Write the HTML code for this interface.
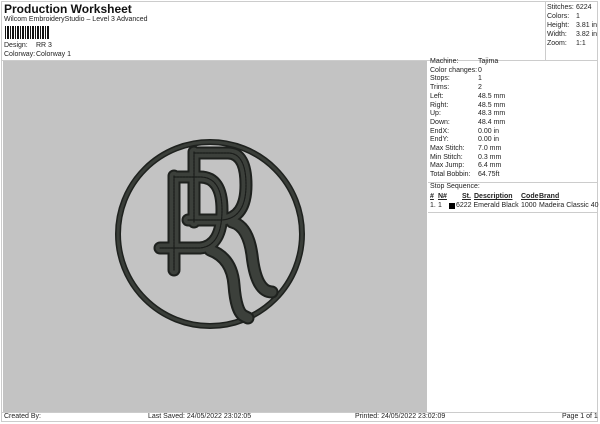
<!DOCTYPE html>
<html><head><meta charset="utf-8"><style>
body{margin:0;width:600px;height:424px;background:#fff;font-family:"Liberation Sans",Arial,sans-serif;position:relative;overflow:hidden;color:#222}
.a{position:absolute;font-size:7px;white-space:nowrap}
</style></head><body>
<div style="position:absolute;left:1px;top:1px;width:597px;height:421px;border:1px solid #ccc;box-sizing:border-box"></div>
<div class="a" style="left:4px;top:2px;font-size:12px;font-weight:bold;color:#111">Production Worksheet</div>
<div class="a" style="left:4px;top:16px">Wilcom EmbroideryStudio – Level 3 Advanced</div>
<svg style="position:absolute;left:5px;top:26px" width="44" height="13"><g fill="#111">
<rect x="0" y="0" width="1" height="13"/><rect x="2" y="0" width="2" height="13"/><rect x="5" y="0" width="1" height="13"/><rect x="7" y="0" width="2" height="13"/><rect x="10" y="0" width="1" height="13"/><rect x="12" y="0" width="2" height="13"/><rect x="15" y="0" width="1" height="13"/><rect x="17" y="0" width="2" height="13"/><rect x="20" y="0" width="1" height="13"/><rect x="22" y="0" width="2" height="13"/><rect x="25" y="0" width="1" height="13"/><rect x="27" y="0" width="2" height="13"/><rect x="30" y="0" width="1" height="13"/><rect x="32" y="0" width="2" height="13"/><rect x="35" y="0" width="1" height="13"/><rect x="37" y="0" width="2" height="13"/><rect x="40" y="0" width="1" height="13"/><rect x="42" y="0" width="2" height="13"/></g></svg>
<div class="a" style="left:4px;top:42px">Design:</div><div class="a" style="left:36px;top:42px">RR 3</div>
<div class="a" style="left:4px;top:51px">Colorway:</div><div class="a" style="left:36px;top:51px">Colorway 1</div>
<div style="position:absolute;left:545px;top:1px;width:1px;height:59px;background:#ccc"></div>
<div style="position:absolute;left:2px;top:60px;width:596px;height:1px;background:#ccc"></div>
<div class="a" style="left:547px;top:3px;line-height:9px">Stitches:<br>Colors:<br>Height:<br>Width:<br>Zoom:</div>
<div class="a" style="left:576px;top:3px;line-height:9px">6224<br>1<br>3.81 in<br>3.82 in<br>1:1</div>
<div style="position:absolute;left:3px;top:61px;width:424px;height:351px;background:#c3c3c3"></div>
<svg style="position:absolute;left:0;top:0" width="430" height="412">
<g fill="none" stroke-linecap="round" stroke-linejoin="round">
<circle cx="210" cy="234" r="92" stroke="#1e211e" stroke-width="6"/>
<circle cx="210" cy="234" r="92" stroke="#3a3e39" stroke-width="3"/>
<g stroke="#1e211e" stroke-width="13">
<path d="M194 152 V222"/><path d="M194 153 H228 Q246 153 246 185 Q246 218 222 220 H188"/><path d="M232 222 Q248 226 252 255 Q256 292 272 292"/>
<path d="M174 176 V270"/><path d="M174 177 H200 Q222 177 222 210 Q222 246 200 248 H160"/><path d="M210 250 Q232 258 234 285 Q236 312 244 316 L248 318"/>
</g>
<g stroke="#3c403b" stroke-width="9">
<path d="M194 152 V222"/><path d="M194 153 H228 Q246 153 246 185 Q246 218 222 220 H188"/><path d="M232 222 Q248 226 252 255 Q256 292 272 292"/>
<path d="M174 176 V270"/><path d="M174 177 H200 Q222 177 222 210 Q222 246 200 248 H160"/><path d="M210 250 Q232 258 234 285 Q236 312 244 316 L248 318"/>
</g>
<g stroke="#1a1c1a" stroke-width="1.2" stroke-dasharray="2 1">
<path d="M194 152 V222"/><path d="M194 153 H228 Q246 153 246 185 Q246 218 222 220 H188"/>
<path d="M174 176 V270"/><path d="M174 177 H200 Q222 177 222 210 Q222 246 200 248 H160"/>
</g></g></svg>
<div class="a" style="left:430px;top:58px;line-height:8.7px">Machine:<br>Color changes:<br>Stops:<br>Trims:<br>Left:<br>Right:<br>Up:<br>Down:<br>EndX:<br>EndY:<br>Max Stitch:<br>Min Stitch:<br>Max Jump:<br>Total Bobbin:</div>
<div class="a" style="left:478px;top:58px;line-height:8.7px">Tajima<br>0<br>1<br>2<br>48.5 mm<br>48.5 mm<br>48.3 mm<br>48.4 mm<br>0.00 in<br>0.00 in<br>7.0 mm<br>0.3 mm<br>6.4 mm<br>64.75ft</div>
<div style="position:absolute;left:428px;top:182px;width:170px;height:1px;background:#ccc"></div>
<div class="a" style="left:430px;top:183px">Stop Sequence:</div>
<div class="a" style="left:430px;top:193px;font-weight:bold;text-decoration:underline">#</div>
<div class="a" style="left:438px;top:193px;font-weight:bold;text-decoration:underline">N#</div>
<div class="a" style="left:462px;top:193px;font-weight:bold;text-decoration:underline">St.</div>
<div class="a" style="left:474px;top:193px;font-weight:bold;text-decoration:underline">Description</div>
<div class="a" style="left:521px;top:193px;font-weight:bold;text-decoration:underline">Code</div>
<div class="a" style="left:539px;top:193px;font-weight:bold;text-decoration:underline">Brand</div>
<div class="a" style="left:430px;top:202px">1.</div><div class="a" style="left:438px;top:202px">1</div>
<div style="position:absolute;left:449px;top:203px;width:6px;height:6px;background:#000"></div>
<div class="a" style="left:456px;top:202px">6222 Emerald Black</div><div class="a" style="left:521px;top:202px">1000</div><div class="a" style="left:539px;top:202px">Madeira Classic 40</div>
<div style="position:absolute;left:428px;top:212px;width:170px;height:1px;background:#ccc"></div>
<div style="position:absolute;left:2px;top:412px;width:596px;height:1px;background:#ccc"></div>
<div class="a" style="left:4px;top:413px">Created By:</div>
<div class="a" style="left:148px;top:413px">Last Saved: 24/05/2022 23:02:05</div>
<div class="a" style="left:355px;top:413px">Printed: 24/05/2022 23:02:09</div>
<div class="a" style="left:562px;top:413px">Page 1 of 1</div>
</body></html>
